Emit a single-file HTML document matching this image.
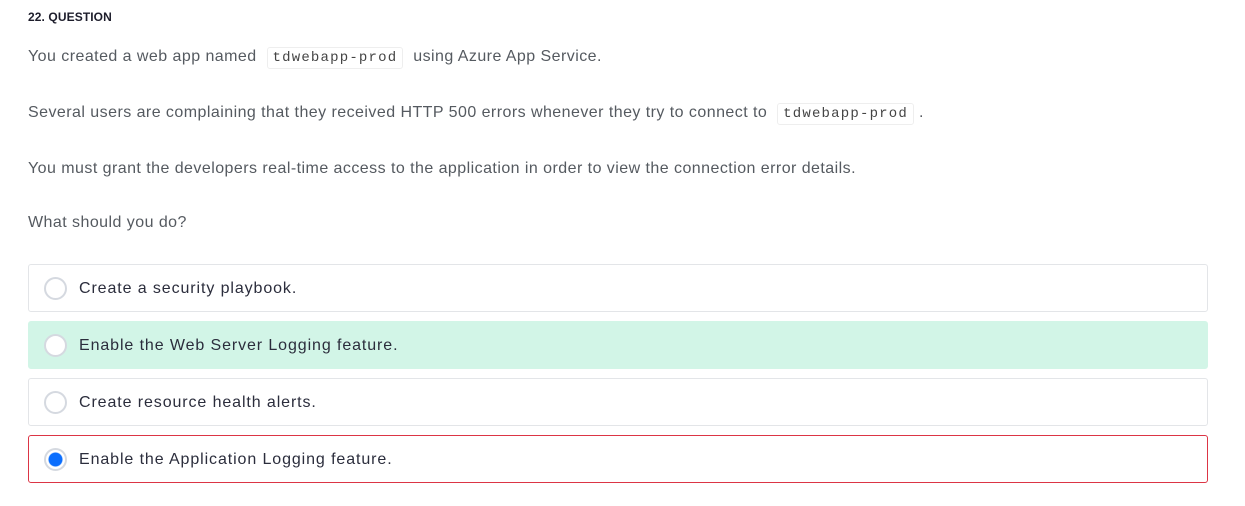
<!DOCTYPE html>
<html><head><style>
body{margin:0;background:#fff;font-family:"Liberation Sans",sans-serif;width:1245px;height:506px;overflow:hidden;position:relative}
.t{position:absolute;left:28px;font-size:12px;font-weight:bold;color:#1d1d2b;top:10px;letter-spacing:0.1px}
.p{position:absolute;left:28px;font-size:16px;color:#555a60;white-space:nowrap;letter-spacing:0.45px}
code{font-family:"Liberation Mono",monospace;font-size:14px;color:#444;border:1px solid #eee;border-radius:3px;padding:2px 5px;margin:0 5px;background:#fff;letter-spacing:1.2px}
.o{position:absolute;left:28px;width:1178px;height:46px;border:1px solid #e3e5e8;border-radius:3px;box-sizing:content-box}
.o .r{position:absolute;left:15px;top:12px;width:19px;height:19px;border:2px solid #d5d9e0;border-radius:50%;background:#fff}
.o span{position:absolute;left:50px;top:15px;font-size:16px;color:#2b2d3c;letter-spacing:0.9px}
</style></head><body>
<div class="t">22. QUESTION</div>
<div class="p" style="top:48px">You created a web app named <code>tdwebapp-prod</code> using Azure App Service.</div>
<div class="p" style="top:104px">Several users are complaining that they received HTTP 500 errors whenever they try to connect to <code>tdwebapp-prod</code>.</div>
<div class="p" style="top:160px">You must grant the developers real-time access to the application in order to view the connection error details.</div>
<div class="p" style="top:214px">What should you do?</div>
<div class="o" style="top:264px"><div class="r"></div><span>Create a security playbook.</span></div>
<div class="o" style="top:321px;background:#d2f5e7;border-color:#d2f5e7"><div class="r"></div><span>Enable the Web Server Logging feature.</span></div>
<div class="o" style="top:378px"><div class="r"></div><span>Create resource health alerts.</span></div>
<div class="o" style="top:435px;border-color:#dc3545"><div class="r" style="background:radial-gradient(circle,#0b6efd 0 6.5px,#fff 7.5px)"></div><span>Enable the Application Logging feature.</span></div>
</body></html>
